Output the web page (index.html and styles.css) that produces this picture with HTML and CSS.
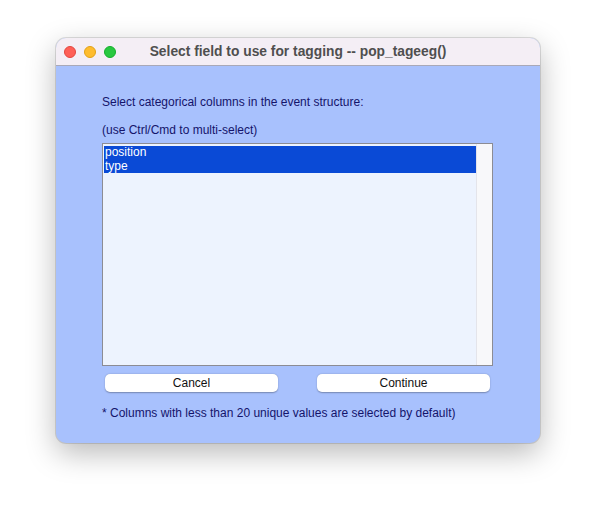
FILE: index.html
```html
<!DOCTYPE html>
<html>
<head>
<meta charset="utf-8">
<link rel="stylesheet" href="styles.css">
</head>
<body>
<div class="stage">
  <div class="window">
    <div class="titlebar">
      <div class="lights">
        <span class="light red"></span>
        <span class="light yellow"></span>
        <span class="light green"></span>
      </div>
      <div class="title">Select field to use for tagging -- pop_tageeg()</div>
    </div>
    <div class="content">
      <p class="label first">Select categorical columns in the event structure:</p>
      <p class="label second">(use Ctrl/Cmd to multi-select)</p>
      <div class="listbox">
        <div class="items">
          <div class="item selected">position</div>
          <div class="item selected">type</div>
        </div>
        <div class="scrollbar"></div>
      </div>
      <div class="buttons">
        <button class="btn">Cancel</button>
        <button class="btn">Continue</button>
      </div>
      <p class="label note">* Columns with less than 20 unique values are selected by default)</p>
    </div>
  </div>
</div>
</body>
</html>
```
FILE: styles.css
```css
* { box-sizing: border-box; }
html, body { margin: 0; padding: 0; background: #ffffff; }
body { font-family: "Liberation Sans", Arial, sans-serif; }
.stage { padding: 38px 0 0 56px; width: 596px; height: 517px; }
.window {
  width: 484px;
  height: 405px;
  border-radius: 10px;
  overflow: hidden;
  background: #a8c1fd;
  box-shadow: 0 10px 30px rgba(0,0,0,0.28), 0 0 0 1px rgba(0,0,0,0.12);
  display: flex;
  flex-direction: column;
}
.titlebar {
  height: 28px;
  background: #f4eef5;
  border-bottom: 1px solid #a9a9b8;
  display: flex;
  align-items: center;
  position: relative;
}
.lights { display: flex; gap: 8px; padding-left: 8px; }
.light { width: 12px; height: 12px; border-radius: 50%; display: block; }
.red { background: #fe5f57; border: 0.5px solid #e2463f; }
.yellow { background: #febc2e; border: 0.5px solid #e1a116; }
.green { background: #28c840; border: 0.5px solid #14ae2b; }
.title {
  position: absolute;
  left: 0; right: 0; top: 0; bottom: 0;
  display: flex; align-items: center; justify-content: center;
  font-weight: bold;
  font-size: 13.8px;
  color: #4f4f4f;
  pointer-events: none;
}
.content { padding: 29px 0 0 46px; display: flex; flex-direction: column; }
.label { margin: 0; font-size: 12px; line-height: 14px; color: #14146b; }
.second { margin-top: 14px; }
.listbox {
  margin-top: 6px;
  width: 391px;
  height: 223px;
  border: 1px solid #8c8c94;
  background: #edf3fe;
  display: flex;
}
.items { flex: 1; padding-top: 2px; padding-left: 1px; }
.item { font-size: 12px; line-height: 13.5px; color: #fff; padding-left: 1px; }
.selected { background: #0a4ad6; }
.scrollbar { width: 16px; background: #f8f8fa; border-left: 1px solid #e4e4ea; }
.buttons { display: flex; gap: 39px; margin-top: 8px; padding-left: 3px; }
.btn {
  width: 173px;
  height: 18px;
  border: none;
  border-radius: 5px;
  background: #ffffff;
  box-shadow: 0 0.5px 1.5px rgba(0,0,0,0.3);
  font-family: "Liberation Sans", Arial, sans-serif;
  font-size: 12px;
  color: #111;
  padding: 0;
  line-height: 18px;
}
.note { margin-top: 14px; }
```
